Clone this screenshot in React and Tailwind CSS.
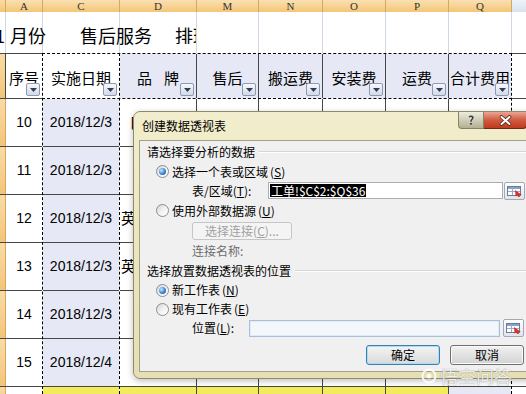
import React from 'react';

const CJK = "font-['Noto_Sans_CJK_SC',sans-serif]";
const NUM = "font-['Liberation_Sans','Noto_Sans_CJK_SC',sans-serif]";
const W = ['w-[37px]', 'w-[77px]', 'w-[77px]', 'w-[62px]', 'w-[64px]', 'w-[63px]', 'w-[63px]', 'w-[63px]'];
const LAV = 'bg-[#e6e9f5]';
const STRIP = 'w-[5px] bg-linear-to-b from-[#f9dba6] to-[#f4c577]';

function Drop() {
  return (
    <span className="absolute right-[2px] bottom-[2px] flex h-[13px] w-[14px] items-center justify-center rounded-[2px] border border-[#8c9ab3] bg-linear-to-b from-[#f7f8fb] to-[#d3d9e6]">
      <svg width="7" height="4" viewBox="0 0 7 4">
        <path d="M0 0h7L3.5 4z" fill="#2f3d5c" />
      </svg>
    </span>
  );
}

function ColumnHeaders() {
  const letters = ['A', 'C', 'D', 'M', 'N', 'O', 'P', 'Q'];
  return (
    <div className="flex h-[12px]">
      <div className={STRIP} />
      {letters.map((l, i) => (
        <div
          key={l}
          className={`${W[i]} flex items-center justify-center border-l border-[#d9a85a] bg-linear-to-b from-[#fae0b2] to-[#f4c677] font-['Liberation_Serif',serif] text-[11px] leading-none text-[#333]`}
        >
          {l}
        </div>
      ))}
      <div className="flex-1 border-l border-[#d9a85a] bg-linear-to-b from-[#eef3fa] to-[#d8e2ef]" />
    </div>
  );
}

function TitleRow() {
  return (
    <div className="relative flex h-[41px]">
      <div className="w-[5px] bg-white" />
      {W.map((w, i) => (
        <div key={i} className={`${w} border-l border-[#d0d7e5] bg-white`} />
      ))}
      <div className="flex-1 border-l border-[#d0d7e5] bg-white" />
      {/* overflowing title text */}
      <div className={`absolute left-0 top-0 flex h-full w-[196px] items-center overflow-hidden whitespace-nowrap pt-[5px] text-[18px] leading-none text-black ${CJK}`}>
        <span className="ml-[-5px]">1</span>
        <span className="ml-[5px]">月份</span>
        <span className="ml-[34px]">售后服务</span>
        <span className="ml-[23px] w-[21px] overflow-hidden">排班</span>
      </div>
    </div>
  );
}

function HeaderRow() {
  const cells = [
    { t: '序号', bg: 'bg-white' },
    { t: '实施日期', bg: 'bg-white' },
    { t: 'pin', bg: LAV },
    { t: '售后', bg: LAV },
    { t: '搬运费', bg: LAV },
    { t: '安装费', bg: LAV },
    { t: '运费', bg: LAV },
    { t: '合计费用', bg: LAV },
  ];
  return (
    <div className="flex h-[45px] border-t border-[#474747]">
      <div className={STRIP} />
      {cells.map((c, i) => (
        <div
          key={i}
          className={`${W[i]} ${c.bg} relative flex items-center justify-center overflow-hidden whitespace-nowrap border-l border-[#474747] pt-[3px] text-[15px] leading-none text-black ${CJK}`}
        >
          {c.t === 'pin' ? (
            <span className="flex gap-[12px]">
              <span>品</span>
              <span>牌</span>
            </span>
          ) : (
            c.t
          )}
          <Drop />
        </div>
      ))}
      <div className="flex-1 border-l border-[#474747] bg-white" />
    </div>
  );
}

const rows = [
  { n: 10, d: '2018/12/3', x: '口', pl: 'pl-[10px]', cw: 'w-[3px]' },
  { n: 11, d: '2018/12/3', x: '', pl: 'pl-[1px]', cw: 'w-[12px]' },
  { n: 12, d: '2018/12/3', x: '英', pl: 'pl-[1px]', cw: 'w-[12px]' },
  { n: 13, d: '2018/12/3', x: '英', pl: 'pl-[1px]', cw: 'w-[12px]' },
  { n: 14, d: '2018/12/3', x: '', pl: 'pl-[1px]', cw: 'w-[12px]' },
  { n: 15, d: '2018/12/4', x: '', pl: 'pl-[1px]', cw: 'w-[12px]' },
];

function DataRow({ r }) {
  return (
    <div className="flex h-[48px] border-t border-[#474747]">
      <div className={STRIP} />
      <div className={`${W[0]} flex items-center justify-center border-l border-[#d3a760] bg-white text-[14px] text-black ${NUM}`}>
        {r.n}
      </div>
      <div className={`${W[1]} ${LAV} flex items-center justify-center border-l border-[#474747] text-[14px] text-black ${NUM}`}>
        {r.d}
      </div>
      <div className={`${W[2]} ${r.pl} flex items-center border-l border-[#474747] bg-white text-[15px] text-black ${CJK}`}>
        <span className={`${r.cw} overflow-hidden whitespace-nowrap`}>{r.x}</span>
      </div>
      {W.slice(3).map((w, i) => (
        <div key={i} className={`${w} border-l border-[#474747] bg-white`} />
      ))}
      <div className="flex-1 border-l border-[#474747] bg-white" />
    </div>
  );
}

function YellowRow() {
  return (
    <div className="flex h-[20px] border-t border-[#474747]">
      <div className={STRIP} />
      <div className={`${W[0]} border-l border-[#d3a760] bg-white`} />
      {W.slice(1, 7).map((w, i) => (
        <div key={i} className={`${w} border-l border-[#474747] bg-[#f2ec5c]`} />
      ))}
      <div className={`${W[7]} ${LAV} border-l border-[#474747]`} />
      <div className="flex-1 border-l border-[#474747] bg-white" />
    </div>
  );
}

function Radio({ on }) {
  return (
    <span className="flex h-[13px] w-[13px] shrink-0 items-center justify-center rounded-full border border-[#8d8d8d] bg-linear-to-br from-[#d4d4d4] via-[#f2f2f2] to-white">
      {on && (
        <span className="h-[7px] w-[7px] rounded-full bg-[radial-gradient(circle_at_35%_35%,#c4e8ff,#3b86d6_55%,#15428b)]" />
      )}
    </span>
  );
}

function RadioRow({ on, label, k, h }) {
  return (
    <div className={`flex ${h} items-center pl-[16px]`}>
      <Radio on={on} />
      <span className="ml-[3px]">
        {label}
        <span className="ml-[2px]">
          (<span className="underline">{k}</span>)
        </span>
      </span>
    </div>
  );
}

function Section({ label, h }) {
  return (
    <div className={`flex ${h} items-center pl-[7px]`}>
      <span>{label}</span>
      <span className="ml-[4px] h-[2px] flex-1 border-t border-b border-t-[#d5d5d5] border-b-white" />
    </div>
  );
}

function RefBtn() {
  return (
    <span className="flex h-[18px] w-[21px] shrink-0 items-center justify-center rounded-[2px] border border-[#a3a9b4] bg-linear-to-b from-white to-[#e1e5ec]">
      <svg width="16" height="12" viewBox="0 0 16 12">
        <rect x="0.5" y="1.5" width="13" height="9" fill="#fff" stroke="#6b7b93" />
        <rect x="1" y="2" width="12" height="2" fill="#7fa3d6" />
        <line x1="1" y1="6.5" x2="13" y2="6.5" stroke="#9aaac0" />
        <line x1="5.5" y1="2" x2="5.5" y2="10" stroke="#9aaac0" />
        <path d="M8 5 L15 10 L12.2 10 L13 12 L11.2 12 L10.4 10.4 L8.6 11.6 Z" fill="#d6312a" />
      </svg>
    </span>
  );
}

function Dialog() {
  return (
    <div className={`absolute left-[133px] top-[111px] flex h-[268px] w-[400px] flex-col rounded-l-[7px] border border-[#8e8a6c] bg-linear-to-b from-[#f2edcc] via-[#ece6bf] to-[#e6dfb3] pb-[6px] pl-[5px] shadow-[0_2px_6px_rgba(0,0,0,0.25)] text-[12px] leading-none text-black ${CJK}`}>
      {/* title bar */}
      <div className="flex h-[28px] items-start">
        <div className="flex h-full flex-1 items-center pl-[3px]">创建数据透视表</div>
        <div className="mr-[5px] flex h-[17px]">
          <div className="flex w-[26px] items-center justify-center rounded-bl-[4px] border border-t-0 border-[#858268] bg-linear-to-b from-[#eeecdc] to-[#b3af91] text-[12px] font-bold text-[#3b3b3b] [text-shadow:0_0_2px_#fff]">
            ?
          </div>
          <div className="flex w-[43px] items-center justify-center rounded-br-[4px] border border-t-0 border-l-0 border-[#6b2a1c] bg-linear-to-b from-[#eaa594] via-[#d05a40] to-[#c03a1e]">
            <svg width="13" height="11" viewBox="0 0 13 11">
              <path d="M2.5 2 L10.5 9 M10.5 2 L2.5 9" stroke="#5a2014" strokeWidth="3.6" strokeLinecap="round" />
              <path d="M2.5 2 L10.5 9 M10.5 2 L2.5 9" stroke="#fff" strokeWidth="2" strokeLinecap="round" />
            </svg>
          </div>
        </div>
      </div>

      {/* client area */}
      <div className="flex-1 border border-[#a5a188] bg-[#f0f0f0] pt-[1px]">
        <Section label="请选择要分析的数据" h="h-[20px]" />
        <RadioRow on label="选择一个表或区域" k="S" h="h-[19px]" />
        <div className="flex h-[19px] items-center pl-[52px]">
          <span className="w-[76px]">
            表/区域(<span className="underline">T</span>):
          </span>
          <span className="flex h-[17px] w-[235px] items-center border border-[#abadb3] bg-white pl-[1px]">
            <span className="bg-black px-[1px] leading-[13px] text-white">工单!$C$2:$Q$36</span>
          </span>
          <span className="ml-[1px]">
            <RefBtn />
          </span>
        </div>
        <RadioRow label="使用外部数据源" k="U" h="h-[21px]" />
        <div className="flex h-[20px] items-center pl-[52px]">
          <span className="flex h-[18px] w-[100px] items-center justify-center rounded-[3px] border border-[#c6c6c6] bg-[#f4f4f4] text-[#a0a0a0]">
            选择连接(<span className="underline">C</span>)...
          </span>
        </div>
        <div className="flex h-[20px] items-center pl-[52px] text-[#6d6d6d]">连接名称:</div>
        <Section label="选择放置数据透视表的位置" h="h-[19px]" />
        <RadioRow on label="新工作表" k="N" h="h-[20px]" />
        <RadioRow label="现有工作表" k="E" h="h-[18px]" />
        <div className="flex h-[20px] items-center pl-[52px]">
          <span className="w-[57px]">
            位置(<span className="underline">L</span>):
          </span>
          <span className="h-[17px] w-[251px] border border-[#a9c0dd] bg-[#f3f6fa] shadow-[inset_0_0_0_1px_#e2ebf5]" />
          <span className="ml-[3px]">
            <RefBtn />
          </span>
        </div>
        <div className="mt-[7px] flex gap-[10px] pl-[226px]">
          <button className="h-[20px] w-[74px] rounded-[3px] border border-[#3c7fb1] bg-linear-to-b from-[#f4f4f4] to-[#dadada] shadow-[inset_0_0_0_1px_#a6def8]">
            确定
          </button>
          <button className="h-[20px] w-[74px] rounded-[3px] border border-[#707070] bg-linear-to-b from-[#f2f2f2] to-[#d2d2d2] shadow-[inset_0_0_0_1px_#fbfbfb]">
            取消
          </button>
        </div>
      </div>
    </div>
  );
}

export default function App() {
  return (
    <div className="relative h-[394px] w-[526px] overflow-hidden bg-white">
      <ColumnHeaders />
      <TitleRow />
      <HeaderRow />
      {rows.map((r) => (
        <DataRow key={r.n} r={r} />
      ))}
      <YellowRow />

      {/* copy marquee */}
      <div className="absolute left-[42px] top-[53px] h-[341px] w-px border-l border-dashed border-black bg-white" />
      <div className="absolute left-[119px] top-[53px] h-[341px] w-px border-l border-dashed border-black bg-white" />
      <div className="absolute left-[511px] top-[53px] h-[341px] w-px border-l border-dashed border-black bg-white" />
      <div className="absolute left-[42px] top-[53px] h-px w-[470px] border-t border-dashed border-black bg-white" />
      <div className="absolute left-[42px] top-[98px] h-px w-[470px] border-t border-dashed border-black bg-white" />

      <Dialog />

      {/* watermark */}
      <div className={`absolute left-[421px] top-[367px] flex items-center gap-[3px] text-[18px] leading-none text-white/85 [text-shadow:0_0_1px_rgba(0,0,0,0.45)] ${CJK}`}>
        <svg width="16" height="16" viewBox="0 0 16 16">
          <circle cx="8" cy="8" r="6.5" fill="none" stroke="rgba(255,255,255,0.85)" strokeWidth="2" />
          <circle cx="8" cy="8" r="2.5" fill="rgba(255,255,255,0.85)" />
        </svg>
        <span>悟空问答</span>
      </div>
    </div>
  );
}
